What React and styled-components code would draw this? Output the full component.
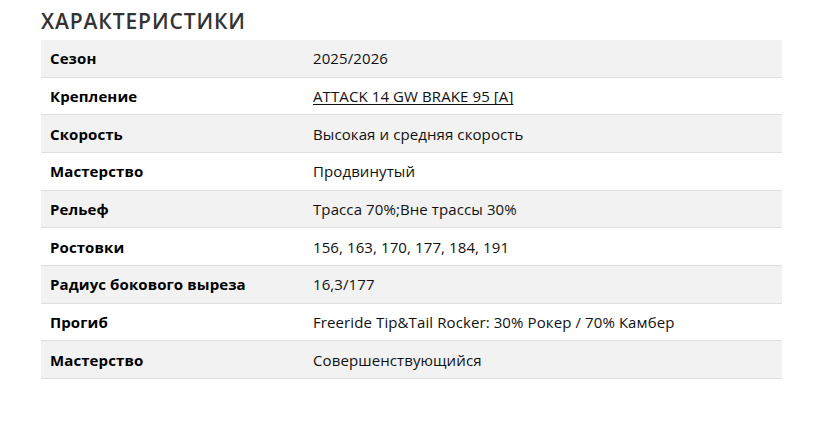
import React from "react";
import styled, { createGlobalStyle } from "styled-components";

const Global = createGlobalStyle`
  html, body { margin: 0; padding: 0; background: #fff; }
  body { font-family: "Open Sans", "Liberation Sans", sans-serif; color: #111; }
`;

const Page = styled.div`
  padding: 7px 43px 0 41px;
`;

const Title = styled.h2`
  margin: 0 0 5px 0;
  font-size: 21px;
  font-weight: 600;
  line-height: 28px;
  letter-spacing: 0.9px;
  color: #333;
`;

const Table = styled.div`
  display: grid;
  grid-template-columns: 263px 1fr;
  width: 741px;
`;

const Row = styled.div`
  display: contents;
`;

const Cell = styled.div`
  box-sizing: border-box;
  height: 37.67px;
  display: flex;
  align-items: center;
  padding: 0 9px;
  font-size: 15px;
  letter-spacing: 0.1px;
  background: ${(p) => (p.$odd ? "#f2f2f2" : "#fff")};
  border-bottom: 1px solid #dfdfdf;
  font-weight: ${(p) => (p.$label ? 700 : 400)};
  color: ${(p) => (p.$label ? "#000" : "#111")};
`;

const Link = styled.a`
  color: #111;
  text-decoration: underline;
  text-underline-offset: 2px;
`;

const rows = [
  ["Сезон", "2025/2026"],
  ["Крепление", "ATTACK 14 GW BRAKE 95 [A]", true],
  ["Скорость", "Высокая и средняя скорость"],
  ["Мастерство", "Продвинутый"],
  ["Рельеф", "Трасса 70%;Вне трассы 30%"],
  ["Ростовки", "156, 163, 170, 177, 184, 191"],
  ["Радиус бокового выреза", "16,3/177"],
  ["Прогиб", "Freeride Tip&Tail Rocker: 30% Рокер / 70% Камбер"],
  ["Мастерство", "Совершенствующийся"],
];

export default function App() {
  return (
    <>
      <Global />
      <Page>
        <Title>ХАРАКТЕРИСТИКИ</Title>
        <Table>
          {rows.map(([k, v, link], i) => (
            <Row key={i}>
              <Cell $label $odd={i % 2 === 0}>{k}</Cell>
              <Cell $odd={i % 2 === 0}>{link ? <Link href="#">{v}</Link> : v}</Cell>
            </Row>
          ))}
        </Table>
      </Page>
    </>
  );
}
